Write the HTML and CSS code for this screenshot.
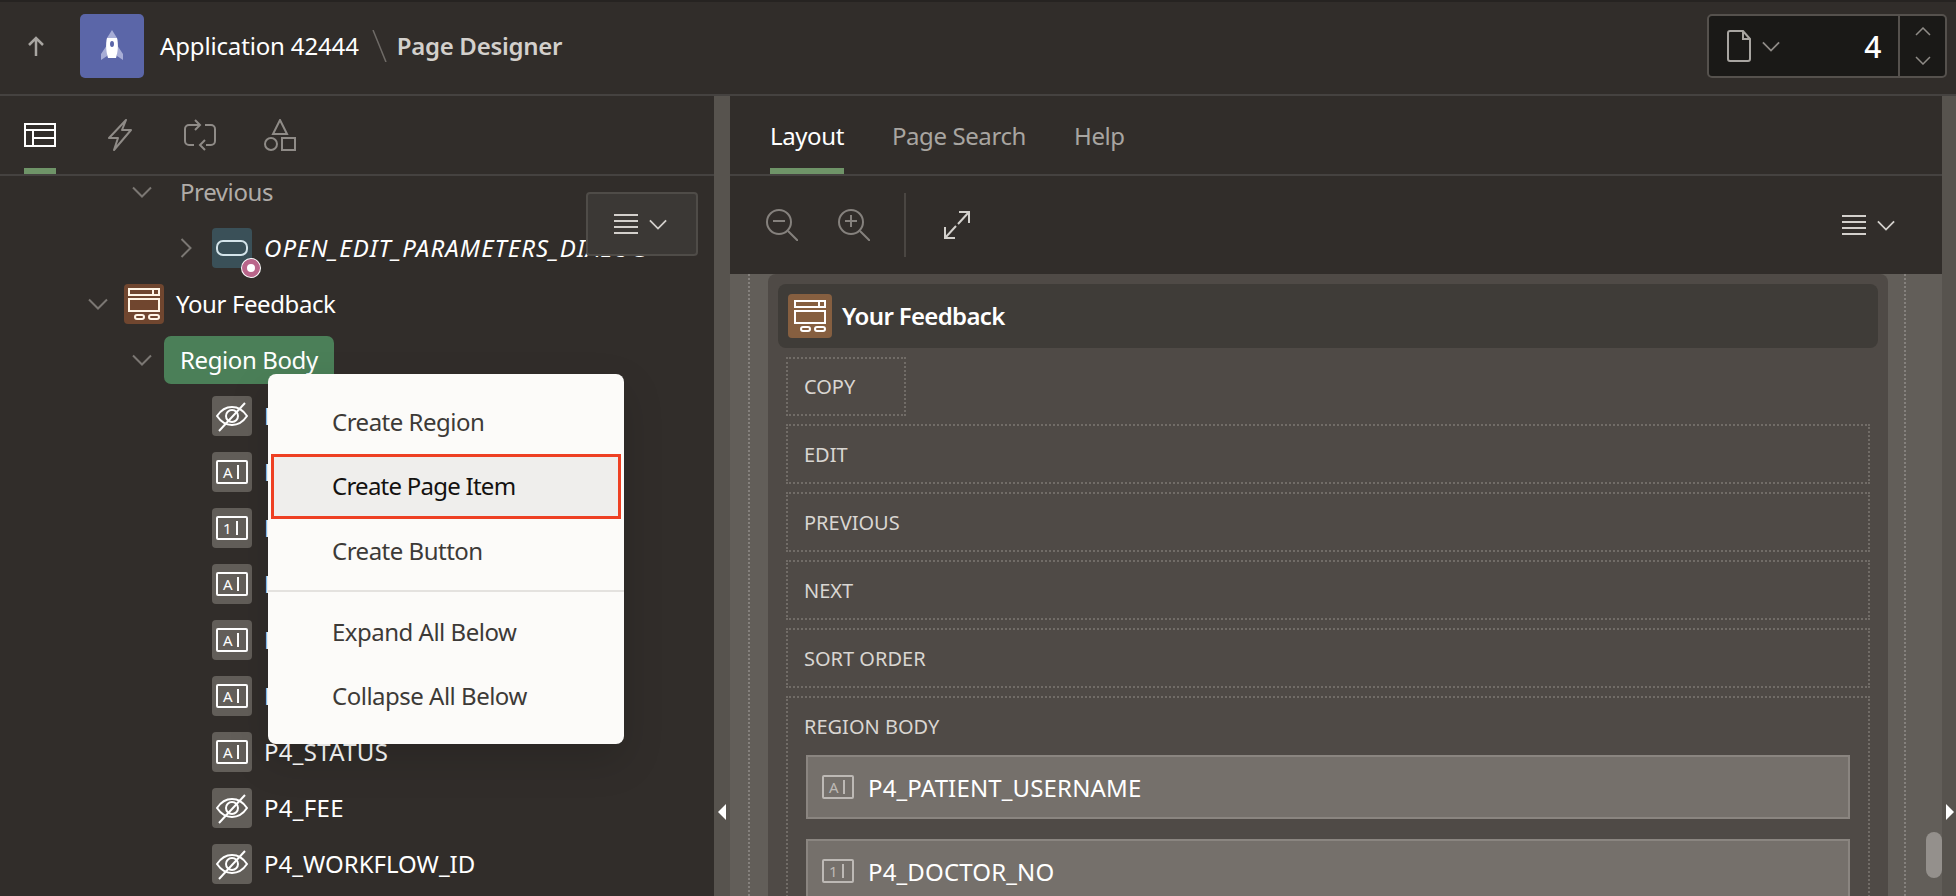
FILE: index.html
```html
<!DOCTYPE html>
<html lang="en">
<head>
    <meta charset="UTF-8">
    <title>Page Designer</title>
    <link rel="stylesheet" href="styles.css">
</head>
<body>
    <!-- Iconos compartidos -->
    <svg class="sprite" width="0" height="0">
        <symbol id="i-chev-down" viewBox="0 0 20 12"><path d="M1 1.500l9 9 9-9" fill="none" stroke="currentColor" stroke-width="2"/></symbol>
        <symbol id="i-chev-right" viewBox="0 0 12 20"><path d="M1.500 1l9 9-9 9" fill="none" stroke="currentColor" stroke-width="2"/></symbol>
        <symbol id="i-menu" viewBox="0 0 24 20"><path d="M0 1h24M0 7h24M0 13h24M0 19h24" fill="none" stroke="currentColor" stroke-width="2"/></symbol>
        <symbol id="i-hidden" viewBox="0 0 32 40"><g fill="none" stroke="currentColor" stroke-width="2"><path d="M1 20c4-6 9-9 15-9s11 3 15 9c-4 6-9 9-15 9s-11-3-15-9z"/><circle cx="16" cy="20" r="6"/><path d="M29 7L3 35"/></g></symbol>
        <symbol id="i-region" viewBox="0 0 32 32"><g fill="none" stroke="currentColor" stroke-width="2"><rect x="1" y="1" width="30" height="6"/><path d="M25 1v6"/><rect x="1" y="11" width="30" height="12"/><rect x="7" y="27" width="9" height="4" rx="2"/><rect x="21" y="27" width="10" height="4" rx="2"/></g></symbol>
    </svg>

    <header class="topbar">
        <button class="up-btn">
            <svg width="18" height="20" viewBox="0 0 18 20"><path d="M9 20V2M2 9l7-7 7 7" fill="none" stroke="#a8a5a1" stroke-width="2.500"/></svg>
        </button>
        <div class="app-tile">
            <svg width="24" height="32" viewBox="0 0 24 32">
                <path d="M7 15L1 24v6l6-4zM17 15l6 9v6l-6-4z" fill="#a7add6"/>
                <path d="M12 0l5 8H7z" fill="#a7add6"/>
                <path d="M7 8h10c1.500 5 1 14-1 20H8C6 22 5.500 13 7 8z" fill="#fff"/>
                <ellipse cx="12" cy="14" rx="2" ry="3" fill="#5b66a8"/>
            </svg>
        </div>
        <span class="app-name">Application 42444</span>
        <svg class="crumb-slash" width="15" height="32" viewBox="0 0 15 32"><path d="M1 0l13 32" stroke="#6f6b67" stroke-width="1.500"/></svg>
        <span class="page-title">Page Designer</span>
        <div class="page-picker">
            <div class="picker-main">
                <svg width="24" height="32" viewBox="0 0 24 32"><path d="M3 1h13l7 8v20a2 2 0 0 1-2 2H3a2 2 0 0 1-2-2V3a2 2 0 0 1 2-2zM16 1v8h7" fill="none" stroke="#a8a5a1" stroke-width="2"/></svg>
                <svg class="picker-chev" width="18" height="11"><use href="#i-chev-down"/></svg>
                <span class="picker-num">4</span>
            </div>
            <div class="picker-steps">
                <svg width="16" height="9" viewBox="0 0 16 9"><path d="M1 8l7-7 7 7" fill="none" stroke="#8f8b87" stroke-width="1.500"/></svg>
                <svg width="16" height="9" viewBox="0 0 16 9"><path d="M1 1l7 7 7-7" fill="none" stroke="#8f8b87" stroke-width="1.500"/></svg>
            </div>
        </div>
    </header>

    <main class="workspace">
        <section class="left-panel">
            <nav class="icon-tabs">
                <div class="icon-tab active">
                    <svg width="32" height="24" viewBox="0 0 32 24"><path d="M1 1h30v22H1zM1 7h30M9 7v16M9 15h22" fill="none" stroke="#fff" stroke-width="2"/></svg>
                </div>
                <div class="icon-tab">
                    <svg width="24" height="32" viewBox="0 0 24 32"><path d="M18 1L1 19h9L6 31l17-20h-9z" fill="none" stroke="#8f8b87" stroke-width="2" stroke-linejoin="round"/></svg>
                </div>
                <div class="icon-tab">
                    <svg width="32" height="32" viewBox="0 0 32 32"><path d="M16 6H5a4 4 0 0 0-4 4v12a4 4 0 0 0 4 4h5M22 26h5a4 4 0 0 0 4-4V10a4 4 0 0 0-4-4h-6M11 1l5 5-5 5M21 21l-5 5 5 5" fill="none" stroke="#8f8b87" stroke-width="2"/></svg>
                </div>
                <div class="icon-tab">
                    <svg width="32" height="32" viewBox="0 0 32 32"><g fill="none" stroke="#8f8b87" stroke-width="2"><path d="M16 1l7 14H9z"/><circle cx="7" cy="25" r="6"/><rect x="18" y="19" width="13" height="12"/></g></svg>
                </div>
            </nav>
            <div class="tree">
                <div class="tree-row lvl-2 muted">
                    <svg class="tw" width="20" height="12"><use href="#i-chev-down"/></svg>
                    <span>Previous</span>
                </div>
                <div class="tree-row lvl-3 em">
                    <svg class="tw-right" width="12" height="20"><use href="#i-chev-right"/></svg>
                    <span class="tile tile-button">
                        <svg width="32" height="16" viewBox="0 0 32 16"><rect x="1" y="1" width="30" height="14" rx="6" fill="none" stroke="currentColor" stroke-width="2"/></svg>
                        <i class="badge"></i>
                    </span>
                    <span>OPEN_EDIT_PARAMETERS_DIALOG</span>
                </div>
                <div class="tree-row lvl-1">
                    <svg class="tw" width="20" height="12"><use href="#i-chev-down"/></svg>
                    <span class="tile tile-region"><svg width="32" height="32"><use href="#i-region"/></svg></span>
                    <span>Your Feedback</span>
                </div>
                <div class="tree-row lvl-2">
                    <svg class="tw" width="20" height="12"><use href="#i-chev-down"/></svg>
                    <span class="selected">Region Body</span>
                </div>
                <div class="tree-row leaf"><span class="tile"><svg width="32" height="40"><use href="#i-hidden"/></svg></span><span>P4_ID</span></div>
                <div class="tree-row leaf"><span class="tile"><span class="field-glyph">A<i></i></span></span><span>P4_PATIENT_USERNAME</span></div>
                <div class="tree-row leaf"><span class="tile"><span class="field-glyph">1<i></i></span></span><span>P4_DOCTOR_NO</span></div>
                <div class="tree-row leaf"><span class="tile"><span class="field-glyph">A<i></i></span></span><span>P4_DATE</span></div>
                <div class="tree-row leaf"><span class="tile"><span class="field-glyph">A<i></i></span></span><span>P4_TIME</span></div>
                <div class="tree-row leaf"><span class="tile"><span class="field-glyph">A<i></i></span></span><span>P4_REASON</span></div>
                <div class="tree-row leaf"><span class="tile"><span class="field-glyph">A<i></i></span></span><span>P4_STATUS</span></div>
                <div class="tree-row leaf"><span class="tile"><svg width="32" height="40"><use href="#i-hidden"/></svg></span><span>P4_FEE</span></div>
                <div class="tree-row leaf"><span class="tile"><svg width="32" height="40"><use href="#i-hidden"/></svg></span><span class="tight">P4_WORKFLOW_ID</span></div>
            </div>

            <button class="float-menu">
                <svg width="24" height="20"><use href="#i-menu"/></svg>
                <svg width="18" height="11"><use href="#i-chev-down"/></svg>
            </button>

            <!-- Menú contextual -->
            <ul class="context-menu">
                <li>Create Region</li>
                <li class="current">Create Page Item</li>
                <li>Create Button</li>
                <li class="sep"></li>
                <li>Expand All Below</li>
                <li>Collapse All Below</li>
            </ul>
        </section>

        <div class="splitter"><i class="arrow-left"></i></div>

        <section class="right-panel">
            <nav class="text-tabs">
                <span class="text-tab active">Layout</span>
                <span class="text-tab">Page Search</span>
                <span class="text-tab">Help</span>
            </nav>
            <div class="toolbar">
                <svg class="zoom-icon" width="32" height="32" viewBox="0 0 32 32"><g fill="none" stroke="#85817d" stroke-width="2"><circle cx="13" cy="13" r="12"/><path d="M22 22l10 10M7 12h12"/></g></svg>
                <svg class="zoom-icon" width="32" height="32" viewBox="0 0 32 32"><g fill="none" stroke="#85817d" stroke-width="2"><circle cx="13" cy="13" r="12"/><path d="M22 22l10 10M7 12h12M13 6v12"/></g></svg>
                <span class="tool-sep"></span>
                <svg width="26" height="28" viewBox="0 0 26 28"><path d="M15 1h10v11M25 1L14 13M1 16v11h10M1 27l11-12" fill="none" stroke="#d3d0cc" stroke-width="2"/></svg>
                <span class="tool-menu">
                    <svg width="24" height="20"><use href="#i-menu"/></svg>
                    <svg width="18" height="11"><use href="#i-chev-down"/></svg>
                </span>
            </div>
            <div class="canvas">
                <div class="page-guides">
                    <div class="region">
                        <div class="region-head">
                            <span class="region-tile"><svg width="32" height="32"><use href="#i-region"/></svg></span>
                            <span class="region-name">Your Feedback</span>
                        </div>
                        <div class="slot slot-small">COPY</div>
                        <div class="slot">EDIT</div>
                        <div class="slot">PREVIOUS</div>
                        <div class="slot">NEXT</div>
                        <div class="slot">SORT ORDER</div>
                        <div class="slot slot-body">
                            <div class="slot-label">REGION BODY</div>
                            <div class="page-item"><span class="field-glyph">A<i></i></span><span>P4_PATIENT_USERNAME</span></div>
                            <div class="page-item"><span class="field-glyph">1<i></i></span><span>P4_DOCTOR_NO</span></div>
                        </div>
                    </div>
                </div>
                <div class="canvas-thumb"></div>
            </div>
        </section>

        <div class="splitter splitter-right"><i class="arrow-right"></i></div>
    </main>
</body>
</html>
```

FILE: styles.css
```css
* {
    box-sizing: border-box;
}
html, body {
    height: 100%;
}
body {
    margin: 0;
    height: 896px;
    overflow: hidden;
    background-color: #312d2a;
    color: #fff;
    font-family: "Noto Sans", "Open Sans", sans-serif;
    font-size: 24px;
    letter-spacing: -0.4px;
    display: flex;
    flex-direction: column;
}
.sprite {
    position: absolute;
}
button {
    font: inherit;
    color: inherit;
    background: none;
    border: none;
    padding: 0;
}

/* Barra superior */
.topbar {
    height: 96px;
    flex: none;
    display: flex;
    align-items: center;
    padding-right: 9px;
    padding-bottom: 4px;
    border-top: 2px solid #262321;
    border-bottom: 2px solid #454240;
}
.up-btn {
    width: 36px;
    margin-left: 18px;
    margin-right: 26px;
    height: 20px;
    display: flex;
    justify-content: center;
}
.app-tile {
    width: 64px;
    height: 64px;
    background-color: #5b66a8;
    border-radius: 5px;
    display: flex;
    align-items: center;
    justify-content: center;
}
.app-name {
    margin-left: 16px;
    padding-bottom: 2px;
    letter-spacing: -0.15px;
}
.crumb-slash {
    margin: 0 10px 0 13px;
}
.page-title {
    padding-bottom: 2px;
    font-weight: 600;
    letter-spacing: -0.3px;
    color: #d3d0cc;
}
.page-picker {
    margin-left: auto;
    width: 240px;
    height: 64px;
    display: flex;
    background-color: #1a1917;
    border: 2px solid #55514d;
    border-radius: 5px;
}
.picker-main {
    width: 191px;
    display: flex;
    align-items: center;
    padding: 0 17px 0 18px;
    border-right: 2px solid #55514d;
}
.picker-chev {
    margin-left: 11px;
    color: #8f8b87;
}
.picker-num {
    margin-left: auto;
    font-size: 30px;
    font-weight: 500;
}
.picker-steps {
    flex: 1;
    display: flex;
    flex-direction: column;
    align-items: center;
    justify-content: center;
    gap: 20px;
}

/* Zona de trabajo */
.workspace {
    flex: 1;
    display: flex;
    min-height: 0;
}
.left-panel {
    position: relative;
    width: 714px;
    flex: none;
    overflow: hidden;
}
.icon-tabs {
    height: 80px;
    display: flex;
    padding-left: 24px;
    gap: 48px;
    border-bottom: 2px solid #454240;
}
.icon-tab {
    width: 32px;
    height: 78px;
    display: flex;
    align-items: center;
    justify-content: center;
}
.icon-tab.active {
    border-bottom: 6px solid #6f9468;
    padding-top: 6px;
}
.icon-tab svg {
    flex: none;
}

/* Árbol */
.tree {
    margin-top: -12px;
}
.tree-row {
    height: 56px;
    display: flex;
    align-items: center;
    white-space: nowrap;
}
.tree-row > span:last-child {
    padding-bottom: 2px;
}
.tree-row .tw {
    color: #7b7773;
    margin-right: 12px;
    flex: none;
}
.tree-row .tw-right {
    color: #7b7773;
    margin-right: 20px;
    flex: none;
}
.lvl-1 {
    padding-left: 88px;
}
.lvl-1 .tw {
    margin-right: 16px;
}
.lvl-2 {
    padding-left: 132px;
}
.lvl-2 .tw {
    margin-right: 28px;
}
.lvl-3 {
    padding-left: 180px;
}
.leaf {
    padding-left: 212px;
    letter-spacing: 0.3px;
}
.tree-row .tight {
    letter-spacing: 0;
}
.muted {
    color: #b0aca8;
}
.em {
    font-style: italic;
    letter-spacing: 1.1px;
}
.tile {
    position: relative;
    width: 40px;
    height: 40px;
    flex: none;
    margin-right: 12px;
    background-color: #625e59;
    border-radius: 4px;
    display: flex;
    align-items: center;
    justify-content: center;
}
.tile-button {
    background-color: #3a5058;
    color: #d4e4ea;
}
.tile-region {
    background-color: #70462f;
    color: #fff5e6;
}
.field-glyph {
    width: 32px;
    height: 24px;
    flex: none;
    display: flex;
    align-items: center;
    padding-left: 5px;
    font-size: 15px;
    font-style: normal;
    letter-spacing: 0;
    border: 2px solid currentColor;
    border-radius: 2px;
}
.field-glyph i {
    width: 2px;
    height: 14px;
    margin-left: 4px;
    background-color: currentColor;
}
.badge {
    position: absolute;
    right: -8px;
    bottom: -9px;
    width: 18px;
    height: 18px;
    border-radius: 50%;
    background-color: #fff;
    border: 5px solid #b9658a;
    box-shadow: 0 0 0 1px #fff;
}
.selected {
    margin-left: -16px;
    height: 48px;
    padding: 0 16px;
    display: flex;
    align-items: center;
    background-color: #4b7f58;
    border-radius: 7px;
}

/* Botón flotante */
.float-menu {
    position: absolute;
    left: 586px;
    top: 96px;
    width: 112px;
    height: 64px;
    display: flex;
    align-items: center;
    justify-content: center;
    gap: 11px;
    padding-right: 3px;
    color: #d3d0cc;
    background-color: #3b3835;
    border: 2px solid #4f4c48;
    border-radius: 4px;
}

/* Menú contextual */
.context-menu {
    position: absolute;
    left: 268px;
    top: 278px;
    width: 356px;
    margin: 0;
    padding: 16px 3px 16px;
    list-style: none;
    letter-spacing: -0.5px;
    color: #3d3a37;
    background-color: #fcfbf9;
    border-radius: 8px;
    box-shadow: 0 16px 40px rgba(0, 0, 0, 0.15);
}
.context-menu li {
    height: 64px;
    padding-left: 61px;
    padding-bottom: 2px;
    display: flex;
    align-items: center;
}
.context-menu li.current {
    height: 65px;
    color: #141210;
    background-color: #efeeec;
    border: 3px solid #ee4023;
    padding-left: 58px;
    letter-spacing: -0.75px;
}
.context-menu li.sep {
    height: 2px;
    margin: 7px -3px 8px;
    padding: 0;
    background-color: #e4e2df;
}

/* Separadores */
.splitter {
    width: 16px;
    flex: none;
    background-color: #57534e;
    padding-top: 708px;
    padding-left: 4px;
}
.splitter-right {
    width: 14px;
}
.arrow-left, .arrow-right {
    display: block;
    width: 0;
    height: 0;
    border-top: 8px solid transparent;
    border-bottom: 8px solid transparent;
}
.arrow-left {
    border-right: 8px solid #fff;
}
.arrow-right {
    border-left: 8px solid #fff;
}

/* Panel derecho */
.right-panel {
    flex: 1;
    min-width: 0;
    display: flex;
    flex-direction: column;
}
.text-tabs {
    height: 80px;
    flex: none;
    display: flex;
    gap: 48px;
    padding-left: 40px;
    border-bottom: 2px solid #454240;
}
.text-tab {
    height: 78px;
    display: flex;
    align-items: center;
    color: #a8a5a1;
}
.text-tab.active {
    color: #fff;
    border-bottom: 6px solid #6f9468;
    padding-top: 6px;
}
.toolbar {
    height: 98px;
    flex: none;
    display: flex;
    align-items: center;
    padding: 0 47px 0 36px;
}
.zoom-icon {
    margin-right: 40px;
}
.zoom-icon + .zoom-icon {
    margin-right: 34px;
}
.tool-sep {
    width: 2px;
    height: 64px;
    margin-right: 38px;
    background-color: #4a4642;
}
.tool-menu {
    margin-left: auto;
    display: flex;
    align-items: center;
    gap: 11px;
    color: #d3d0cc;
}

/* Lienzo */
.canvas {
    position: relative;
    flex: 1;
    min-height: 0;
    overflow: hidden;
    background-color: #625e59;
    padding: 0 0 0 18px;
}
.page-guides {
    width: 1158px;
    height: 100%;
    border-left: 2px dotted #85817d;
    border-right: 2px dotted #85817d;
    padding: 0 19px 0 18px;
}
.region {
    width: 1120px;
    background-color: #4f4a46;
    padding: 10px 10px 0;
    border-radius: 8px 8px 0 0;
}
.region-head {
    height: 64px;
    display: flex;
    align-items: center;
    gap: 10px;
    padding-left: 10px;
    font-weight: 600;
    letter-spacing: -0.67px;
    background-color: #3f3c38;
    border-radius: 8px;
    margin-bottom: 9px;
}
.region-name {
    padding-bottom: 2px;
}
.region-tile {
    width: 44px;
    height: 44px;
    display: flex;
    align-items: center;
    justify-content: center;
    background-color: #865f40;
    border-radius: 4px;
}
.slot {
    height: 60px;
    margin: 0 8px 8px;
    padding-left: 16px;
    display: flex;
    align-items: center;
    font-size: 20px;
    letter-spacing: 0;
    color: #d9d6d2;
    border: 2px dotted #716c67;
}
.slot-small {
    width: 120px;
    height: 59px;
}
.slot-body {
    display: block;
    height: 240px;
    padding: 15px 18px 0;
}
.slot-label {
    margin: 0 0 14px -2px;
    line-height: 28px;
}
.page-item {
    height: 64px;
    margin-bottom: 20px;
    padding-left: 14px;
    display: flex;
    align-items: center;
    gap: 14px;
    font-size: 24px;
    letter-spacing: 0.15px;
    color: #fff;
    background-color: #75706b;
    border: 2px solid #8a8580;
}
.page-item .field-glyph {
    color: #bdb9b5;
}
.canvas-thumb {
    position: absolute;
    right: 0;
    top: 558px;
    width: 16px;
    height: 46px;
    border-radius: 8px;
    background-color: #94908c;
}
```
